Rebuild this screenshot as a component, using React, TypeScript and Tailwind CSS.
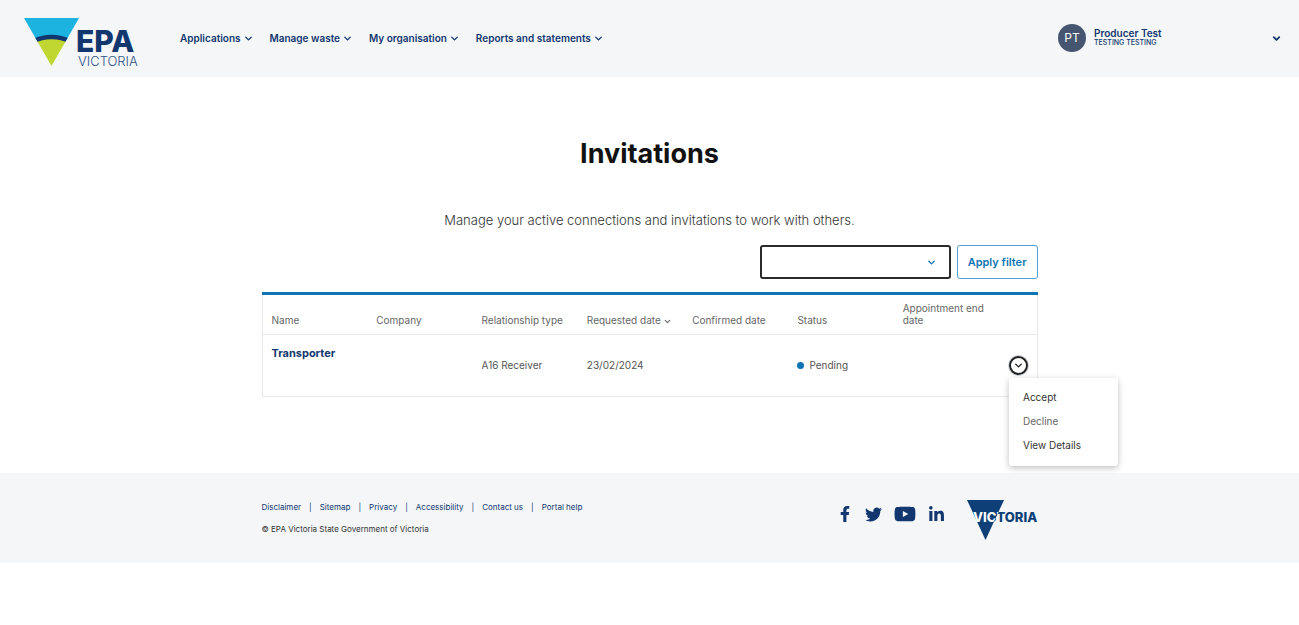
import type { ReactNode } from "react";
import { ChevronDown } from "lucide-react";
import { FaFacebookF, FaLinkedinIn, FaTwitter, FaYoutube } from "react-icons/fa";

interface Invitation {
  name: string;
  company: string;
  relationship: string;
  requested: string;
  confirmed: string;
  status: string;
  endDate: string;
}

const navItems = [
  "Applications",
  "Manage waste",
  "My organisation",
  "Reports and statements",
];

const columns = [
  "Name",
  "Company",
  "Relationship type",
  "Requested date",
  "Confirmed date",
  "Status",
  "Appointment end date",
];

const invitations: Invitation[] = [
  {
    name: "Transporter",
    company: "",
    relationship: "A16 Receiver",
    requested: "23/02/2024",
    confirmed: "",
    status: "Pending",
    endDate: "",
  },
];

const footerLinks = [
  "Disclaimer",
  "Sitemap",
  "Privacy",
  "Accessibility",
  "Contact us",
  "Portal help",
];

function EpaLogo() {
  return (
    <svg
      width="116"
      height="50"
      viewBox="0 0 116 50"
      role="img"
      aria-label="EPA Victoria"
      className="shrink-0"
    >
      <clipPath id="epa-triangle">
        <path d="M0 0H55L27.5 48Z" />
      </clipPath>
      <g clipPath="url(#epa-triangle)">
        <rect width="55" height="24" fill="#1cb3e0" />
        <path d="M8 25Q27.5 16 47 25V50H8Z" fill="#bfd730" />
        <path d="M8 23.5Q27.5 14.500 47 23.5" fill="none" stroke="#12376f" strokeWidth="4.5" />
      </g>
      <text
        x="52"
        y="34"
        fontFamily="Inter, sans-serif"
        fontWeight="800"
        fontSize="30"
        fill="#12376f"
      >
        EPA
      </text>
      <text
        x="54"
        y="48"
        fontFamily="Inter, sans-serif"
        fontWeight="300"
        fontSize="13"
        fill="#2f5489"
      >
        VICTORIA
      </text>
    </svg>
  );
}

function VictoriaLogo() {
  return (
    <svg width="72" height="40" viewBox="0 0 72 40" role="img" aria-label="Victoria">
      <defs>
        <linearGradient
          id="victoria-text"
          gradientUnits="userSpaceOnUse"
          x1="29"
          y1="18"
          x2="30"
          y2="18.5"
        >
          <stop offset="0" stopColor="#ffffff" />
          <stop offset="1" stopColor="#0f3f77" />
        </linearGradient>
      </defs>
      <path d="M1 0H38L19.5 40Z" fill="#0f3f77" />
      <text
        x="7"
        y="22"
        fontFamily="Inter, sans-serif"
        fontWeight="800"
        fontSize="13"
        fill="url(#victoria-text)"
      >
        VICTORIA
      </text>
    </svg>
  );
}

function SocialLink({ label, children }: { label: string; children: ReactNode }) {
  return (
    <a href="#" aria-label={label} className="flex items-center">
      {children}
    </a>
  );
}

function Header() {
  return (
    <header className="flex h-[77px] items-center bg-[#f4f6f8] pr-[17px] pl-6 text-[#12376f]">
      <a href="#" className="mt-2">
        <EpaLogo />
      </a>
      <nav aria-label="Main" className="ml-10 flex gap-4 text-[10px] font-semibold">
        {navItems.map((item) => (
          <button key={item} type="button" className="flex items-center gap-0.5 whitespace-nowrap">
            {item}
            <ChevronDown size={11} strokeWidth={3} />
          </button>
        ))}
      </nav>
      <button type="button" className="ml-auto flex w-[224px] items-center text-left">
        <span className="mb-0.5 flex size-7 items-center justify-center rounded-full bg-[#465670] text-xs text-white">
          PT
        </span>
        <span className="ml-2 pb-1">
          <span className="block text-[10px] leading-3 font-semibold">Producer Test</span>
          <span className="block text-[7px] leading-2 font-medium">TESTING TESTING</span>
        </span>
        <ChevronDown size={11} strokeWidth={4} className="ml-auto" />
      </button>
    </header>
  );
}

function ActionMenu() {
  return (
    <div className="relative flex">
      <button
        type="button"
        aria-label="Actions"
        aria-expanded="true"
        className="flex size-[19px] items-center justify-center rounded-full border-2 border-[#222] text-[#222] ring-1 ring-gray-300"
      >
        <ChevronDown size={11} strokeWidth={3} />
      </button>
      <div className="absolute top-full left-0 z-10 mt-[3px] flex w-[109px] flex-col items-start gap-3 rounded-[3px] bg-white px-[14px] pt-[13px] pb-[15px] text-[10px] leading-3 text-[#333] shadow-[0_2px_6px_rgba(0,0,0,0.25)]">
        <button type="button">Accept</button>
        <button type="button" className="text-[#666]">
          Decline
        </button>
        <button type="button">View Details</button>
      </div>
    </div>
  );
}

function InvitationTable() {
  return (
    <table className="mt-[13px] w-full table-fixed border-collapse border border-[#e6e8ea] text-left">
      <thead>
        <tr className="h-[41px] border-t-3 border-b border-t-[#0e74b4] border-b-[#e6e8ea] align-bottom text-[10px] leading-3 text-[#666]">
          {columns.map((column) => (
            <th key={column} scope="col" className="pr-1 pb-2 pl-[9px] font-normal">
              {column}
              {column === "Requested date" && (
                <ChevronDown size={9} strokeWidth={3} className="ml-0.5 inline" />
              )}
            </th>
          ))}
          <td className="w-[38px]" />
        </tr>
      </thead>
      <tbody>
        {invitations.map((row) => (
          <tr key={row.name} className="h-[62px] text-[10px] text-[#555]">
            <td className="px-[9px] pt-3 align-top leading-3">
              <a href="#" className="text-[11px] font-bold text-[#12376f]">
                {row.name}
              </a>
            </td>
            <td className="px-[9px]">{row.company}</td>
            <td className="px-[9px]">{row.relationship}</td>
            <td className="px-[9px]">{row.requested}</td>
            <td className="px-[9px]">{row.confirmed}</td>
            <td className="px-[9px]">
              <span className="flex items-center gap-[5px]">
                <span className="size-[7px] rounded-full bg-[#0e74b4]" />
                {row.status}
              </span>
            </td>
            <td className="px-[9px]">{row.endDate}</td>
            <td className="pl-[10px]">
              <ActionMenu />
            </td>
          </tr>
        ))}
      </tbody>
    </table>
  );
}

function Footer() {
  return (
    <footer className="bg-[#f4f6f8] text-[#12376f]">
      <div className="mx-auto flex max-w-[776px] items-start justify-between pt-[27px] pb-[23px]">
        <div className="text-[8px] leading-[14px]">
          <ul className="flex">
            {footerLinks.map((link, index) => (
              <li key={link} className="whitespace-nowrap">
                {index > 0 && <span className="mx-2">|</span>}
                <a href="#">{link}</a>
              </li>
            ))}
          </ul>
          <p className="mt-2 text-[#333]">© EPA Victoria State Government of Victoria</p>
        </div>
        <div className="flex items-start">
          <div className="mt-1 mr-[21px] flex h-5 items-center gap-3">
            <SocialLink label="Facebook">
              <FaFacebookF size={16} />
            </SocialLink>
            <SocialLink label="Twitter">
              <FaTwitter size={17} />
            </SocialLink>
            <SocialLink label="YouTube">
              <FaYoutube size={22} />
            </SocialLink>
            <SocialLink label="LinkedIn">
              <FaLinkedinIn size={17} />
            </SocialLink>
          </div>
          <VictoriaLogo />
        </div>
      </div>
    </footer>
  );
}

export default function App() {
  return (
    <div className="min-h-screen bg-white font-['Inter',sans-serif]">
      <Header />
      <main className="mx-auto max-w-[776px] pt-[61px] pb-[76px]">
        <h1 className="text-center text-[27px] leading-8 font-bold text-[#111]">Invitations</h1>
        <p className="mt-10 text-center text-[13px] leading-5 font-light text-[#333]">
          Manage your active connections and invitations to work with others.
        </p>
        <form className="mt-[15px] flex justify-end gap-[6px]">
          <div className="grid w-[191px] items-center">
            <select
              aria-label="Filter by status"
              className="col-start-1 row-start-1 h-[34px] appearance-none rounded-[3px] border-2 border-[#2b2b2b] bg-white px-3 text-xs"
            >
              <option value=""></option>
              <option>Pending</option>
            </select>
            <ChevronDown
              size={11}
              strokeWidth={3}
              className="pointer-events-none col-start-1 row-start-1 mr-[14px] justify-self-end text-[#0e74b4]"
            />
          </div>
          <button
            type="button"
            className="h-[34px] rounded-[3px] border border-[#4f9fd0] px-[10px] text-[11px] font-semibold text-[#0e74b4]"
          >
            Apply filter
          </button>
        </form>
        <InvitationTable />
      </main>
      <Footer />
    </div>
  );
}
